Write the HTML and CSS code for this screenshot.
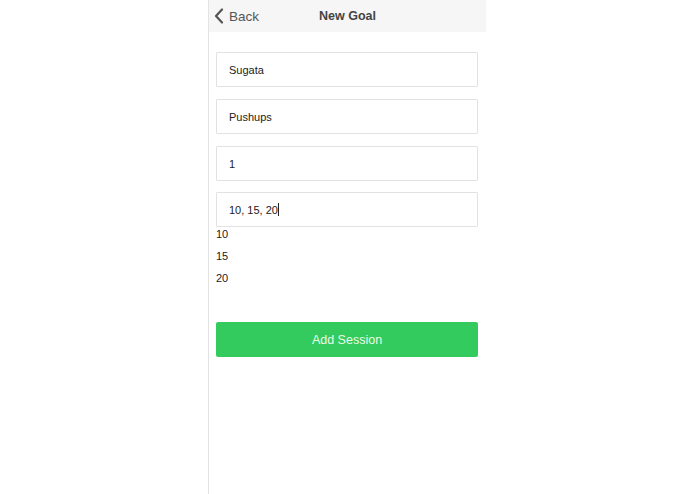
FILE: index.html
```html
<!DOCTYPE html>
<html>
<head>
<meta charset="utf-8">
<link rel="stylesheet" href="styles.css">
</head>
<body>
<div class="page">
  <header class="bar">
    <div class="back">
      <svg class="chev" width="10" height="16" viewBox="0 0 10 16"><path d="M8 1.5 L2 8 L8 14.5" fill="none" stroke="#555" stroke-width="2.2" stroke-linecap="round" stroke-linejoin="round"/></svg>
      <span>Back</span>
    </div>
    <div class="title">New Goal</div>
  </header>
  <form class="form">
    <div class="field">Sugata</div>
    <div class="field">Pushups</div>
    <div class="field">1</div>
    <div class="field">10, 15, 20<span class="caret"></span></div>
    <ul class="reps">
      <li>10</li>
      <li>15</li>
      <li>20</li>
    </ul>
    <div class="btn">Add Session</div>
  </form>
</div>
</body>
</html>
```

FILE: styles.css
```css
html, body {
  margin: 0;
  padding: 0;
  background: #fff;
  font-family: "Liberation Sans", Arial, sans-serif;
}
.page {
  margin-left: 208px;
  width: 277px;
  min-height: 494px;
  border-left: 1px solid #e3e3e3;
}
.bar {
  position: relative;
  height: 32px;
  background: #f6f6f6;
  display: flex;
  align-items: center;
}
.back {
  display: flex;
  align-items: center;
  padding-left: 5px;
  color: #555;
  font-size: 13.5px;
}
.chev {
  margin-right: 5px;
}
.title {
  position: absolute;
  left: 0;
  right: 0;
  top: 0;
  line-height: 32px;
  text-align: center;
  font-size: 12.5px;
  font-weight: bold;
  color: #444;
  pointer-events: none;
}
.form {
  padding: 20px 8px 0 7px;
  display: flex;
  flex-direction: column;
}
.field {
  height: 33px;
  border: 1px solid #e2e2e2;
  border-radius: 1px;
  padding-left: 12px;
  display: flex;
  align-items: center;
  font-size: 11px;
  color: #222;
  margin-bottom: 12px;
}
.field:nth-child(3) {
  margin-bottom: 11px;
}
.field:nth-child(4) {
  margin-bottom: 0;
}
.caret {
  display: inline-block;
  width: 1px;
  height: 13px;
  background: #222;
}
.reps {
  list-style: none;
  margin: 0;
  padding: 0;
  display: flex;
  flex-direction: column;
  gap: 8px;
  font-size: 11px;
  line-height: 14px;
  color: #222;
}
.btn {
  margin-top: 37px;
  height: 35px;
  background: #33cb5e;
  border-radius: 2px;
  color: #eafbe9;
  font-size: 12.5px;
  display: flex;
  align-items: center;
  justify-content: center;
}
```
